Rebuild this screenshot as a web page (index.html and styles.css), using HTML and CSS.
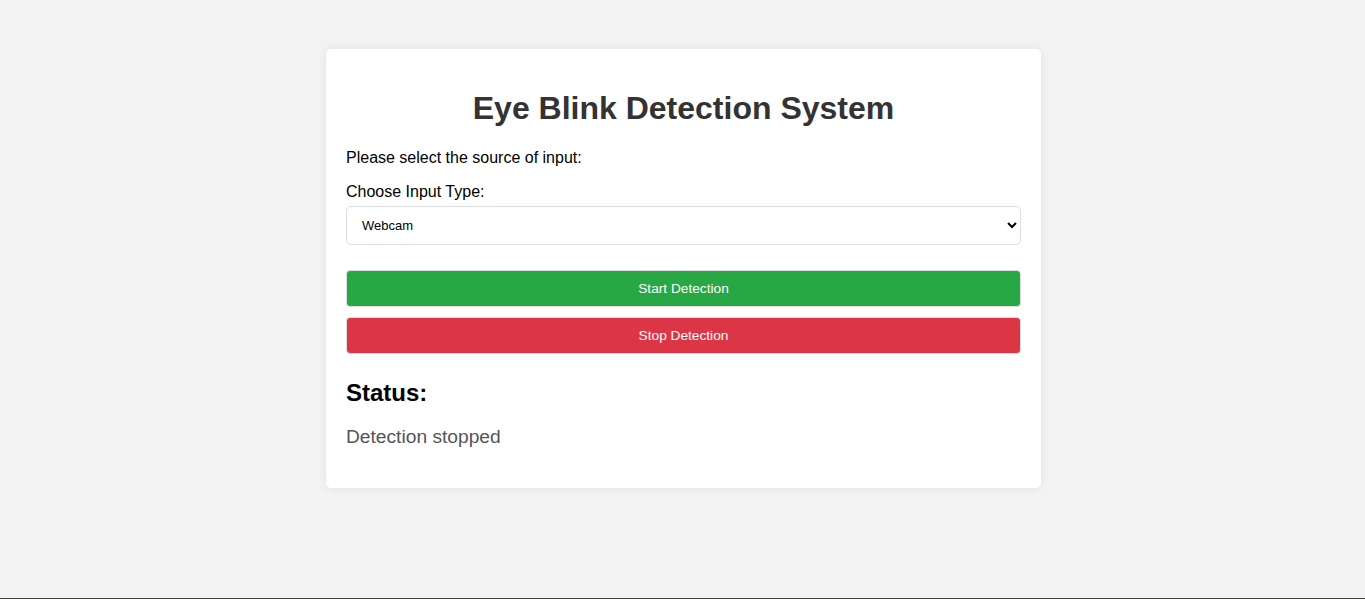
FILE: index.html
```html
<!DOCTYPE html>
<html lang="en">
<head>
<meta charset="utf-8">
<title>Eye Blink Detection System</title>
<link rel="stylesheet" href="styles.css">
</head>
<body>
<div class="container">
  <h1 class="title">Eye Blink Detection System</h1>
  <p class="intro">Please select the source of input:</p>
  <label class="label" for="inputType">Choose Input Type:</label>
  <select id="inputType" class="select">
    <option>Webcam</option>
    <option>Video File</option>
  </select>
  <button class="btn btn-start">Start Detection</button>
  <button class="btn btn-stop">Stop Detection</button>
  <h2 class="status-title">Status:</h2>
  <p class="status-text">Detection stopped</p>
</div>
</body>
</html>
```
FILE: styles.css
```css
html, body {
  margin: 0;
  padding: 0;
}
body {
  font-family: "Liberation Sans", Arial, sans-serif;
  background: #f3f3f3;
  min-height: 100vh;
  box-sizing: border-box;
  border-bottom: 1px solid #3f3f3a;
  padding: 49px 0 0 2px;
}
.container {
  width: 675px;
  margin: 0 auto;
  background: #fff;
  padding: 20px;
  border-radius: 5px;
  box-shadow: 0 0 10px rgba(0, 0, 0, 0.08);
  display: flex;
  flex-direction: column;
}
.title {
  text-align: center;
  color: #333;
  font-size: 32px;
  margin: 21px 0 22px;
}
.intro {
  font-size: 16px;
  margin: 0 0 16px;
  color: #000;
}
.label {
  font-size: 16px;
  margin-bottom: 5px;
}
.select {
  height: 39px;
  padding: 0 11px;
  font-family: "Liberation Sans", Arial, sans-serif;
  font-size: 13px;
  border: 1px solid #ddd;
  border-radius: 5px;
  background: #fff;
  color: #000;
  margin-bottom: 25px;
}
.btn {
  height: 37px;
  border: 1px solid #ddd;
  border-radius: 4px;
  color: #fff;
  font-family: "Liberation Sans", Arial, sans-serif;
  font-weight: normal;
  font-size: 13.7px;
  cursor: pointer;
}
.btn-start {
  background: #28a745;
  margin-bottom: 10px;
}
.btn-stop {
  background: #dc3545;
}
.status-title {
  font-size: 24px;
  margin: 25px 0 19px;
  color: #000;
}
.status-text {
  font-size: 19.2px;
  color: #555;
  margin: 0 0 20px;
}
```
